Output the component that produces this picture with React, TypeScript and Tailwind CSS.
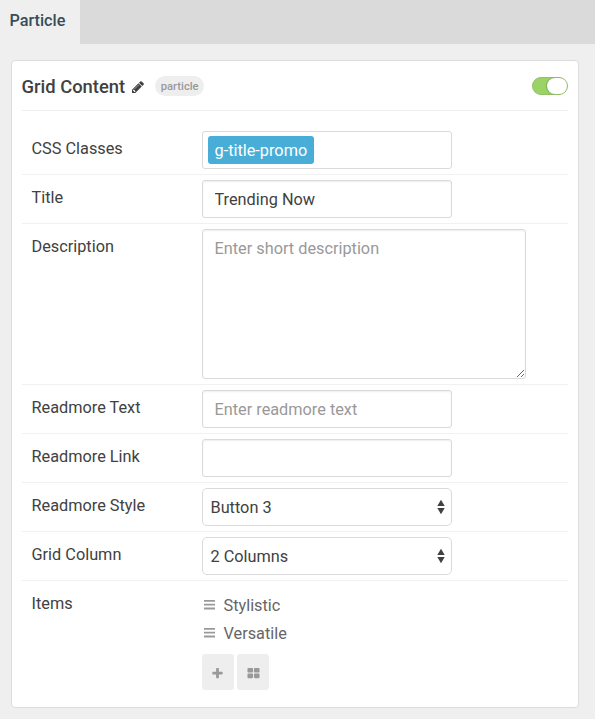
import type { ReactNode } from "react";

const fieldBase =
  "box-border h-[38px] w-[250px] rounded-[3px] border border-[#dadada] bg-white px-[11.5px] text-[16.3px] text-[#414141] shadow-[inset_0_1px_2px_rgba(0,0,0,0.07)] outline-none placeholder:text-[#999]";

function Glyph({ d, className }: { d: string; className: string }) {
  return (
    <svg viewBox="0 0 1792 1792" fill="currentColor" className={className} aria-hidden="true">
      <path d={d} />
    </svg>
  );
}

const PENCIL =
  "M491 1536l91-91-235-235-91 91v107h128v128h107zm523-928q0-22-22-22-10 0-17 7l-542 542q-7 7-7 17 0 22 22 22 10 0 17-7l542-542q7-7 7-17zm-54-192l416 416-832 832h-416v-416zm683 96q0 53-37 90l-166 166-416-416 166-165q36-38 90-38 53 0 91 38l235 234q37 39 37 91z";
const PLUS =
  "M1600 736v192q0 40-28 68t-68 28h-416v416q0 40-28 68t-68 28h-192q-40 0-68-28t-28-68v-416h-416q-40 0-68-28t-28-68v-192q0-40 28-68t68-28h416v-416q0-40 28-68t68-28h192q40 0 68 28t28 68v416h416q40 0 68 28t28 68z";
const GRID =
  "M832 1024v384q0 52-38 90t-90 38h-512q-52 0-90-38t-38-90v-384q0-52 38-90t90-38h512q52 0 90 38t38 90zm0-768v384q0 52-38 90t-90 38h-512q-52 0-90-38t-38-90v-384q0-52 38-90t90-38h512q52 0 90 38t38 90zm896 768v384q0 52-38 90t-90 38h-512q-52 0-90-38t-38-90v-384q0-52 38-90t90-38h512q52 0 90 38t38 90zm0-768v384q0 52-38 90t-90 38h-512q-52 0-90-38t-38-90v-384q0-52 38-90t90-38h512q52 0 90 38t38 90z";

function Row({ label, children, last }: { label: string; children: ReactNode; last?: boolean }) {
  return (
    <div className={`flex items-start py-[5px] pl-[9.5px] ${last ? "" : "border-b border-[#f1f1f1]"}`}>
      <span className="w-[170.5px] shrink-0 pt-[6px] leading-6">{label}</span>
      {children}
    </div>
  );
}

function Select({ value }: { value: string }) {
  return (
    <button
      type="button"
      className="flex h-[38px] w-[250px] items-center justify-between rounded-[5px] border border-[#dadada] bg-white pr-[6px] pl-[7.5px] text-left"
    >
      <span className="pt-[2px]">{value}</span>
      <svg viewBox="0 0 8 16" className="h-4 w-2" fill="#414141" aria-hidden="true">
        <path d="M4 .7 7.7 7H.3zM.3 9h7.4L4 15.3z" />
      </svg>
    </button>
  );
}

function Item({ name }: { name: string }) {
  return (
    <div className="flex h-7 items-center text-[#666]">
      <svg viewBox="0 0 11 10" className="mr-[8.5px] ml-[2px] h-[10px] w-[11px]" fill="#999" aria-hidden="true">
        <path d="M0 0h11v1.8H0zM0 3.8h11v1.8H0zM0 7.6h11v1.8H0z" />
      </svg>
      <span className="pt-[2px]">{name}</span>
    </div>
  );
}

export default function App() {
  return (
    <div className="h-[719px] w-[595px] overflow-hidden bg-[#efefef] font-['Roboto',sans-serif] text-[16.3px] text-[#414141]">
      <nav className="flex h-11 bg-[#dadada]">
        <div className="w-20 bg-[#efefef] pt-[9px] pl-[9.5px] text-[16.2px] leading-6 font-medium text-[#354d59]">
          Particle
        </div>
      </nav>
      <section className="mt-4 ml-[11px] h-[648px] w-[568px] rounded-[4px] border border-[#dcdcdc] bg-white px-[10px]">
        <header className="flex h-[50px] items-center border-b border-[#eee]">
          <h1 className="-ml-[0.5px] pt-[2px] text-[18.4px] leading-6 font-medium">Grid Content</h1>
          <Glyph d={PENCIL} className="mt-[2px] ml-[6px] h-[14px] w-[14px]" />
          <span className="ml-[10px] flex h-5 w-[49px] items-center justify-center rounded-full bg-[#eee] pt-[3px] text-[11.2px] leading-4 font-medium text-[#999]">
            particle
          </span>
          <button
            type="button"
            aria-label="Enabled"
            className="mr-0 ml-auto flex h-[18px] w-9 items-center justify-end rounded-full border border-[#93bf68] bg-[#9bd366]"
          >
            <span className="h-4 w-5 rounded-full bg-white shadow-[-1px_0_1px_rgba(0,0,0,0.2)]" />
          </button>
        </header>
        <div className="pt-[15px]">
          <Row label="CSS Classes">
            <div className="flex h-[38px] w-[250px] items-center rounded-[3px] border border-[#dadada] bg-white pl-[5px]">
              <span className="h-7 w-[106px] rounded-[3px] bg-[#48aed7] px-[6.5px] pt-px leading-7 whitespace-nowrap text-white">
                g-title-promo
              </span>
            </div>
          </Row>
          <Row label="Title">
            <input className={fieldBase} defaultValue="Trending Now" />
          </Row>
          <Row label="Description">
            <textarea
              className="block h-[150px] w-[324px] resize rounded-[3px] border border-[#dadada] px-[11.5px] py-[7px] leading-6 shadow-[inset_0_1px_2px_rgba(0,0,0,0.07)] outline-none placeholder:text-[#999]"
              placeholder="Enter short description"
            />
          </Row>
          <Row label="Readmore Text">
            <input className={fieldBase} placeholder="Enter readmore text" />
          </Row>
          <Row label="Readmore Link">
            <input className={fieldBase} aria-label="Readmore Link" />
          </Row>
          <Row label="Readmore Style">
            <Select value="Button 3" />
          </Row>
          <Row label="Grid Column">
            <Select value="2 Columns" />
          </Row>
          <Row label="Items" last>
            <div className="pt-[5px]">
              <Item name="Stylistic" />
              <Item name="Versatile" />
              <div className="mt-[7px] flex gap-[3px] text-[#999]">
                <button type="button" aria-label="Add" className="flex h-9 w-8 items-center justify-center rounded-[3px] bg-[#eee]">
                  <Glyph d={PLUS} className="mt-[2px] mr-px h-[13px] w-[13px]" />
                </button>
                <button type="button" aria-label="Edit all" className="flex h-9 w-8 items-center justify-center rounded-[3px] bg-[#eee]">
                  <Glyph d={GRID} className="mt-[2px] h-[13px] w-[13px]" />
                </button>
              </div>
            </div>
          </Row>
        </div>
      </section>
    </div>
  );
}
